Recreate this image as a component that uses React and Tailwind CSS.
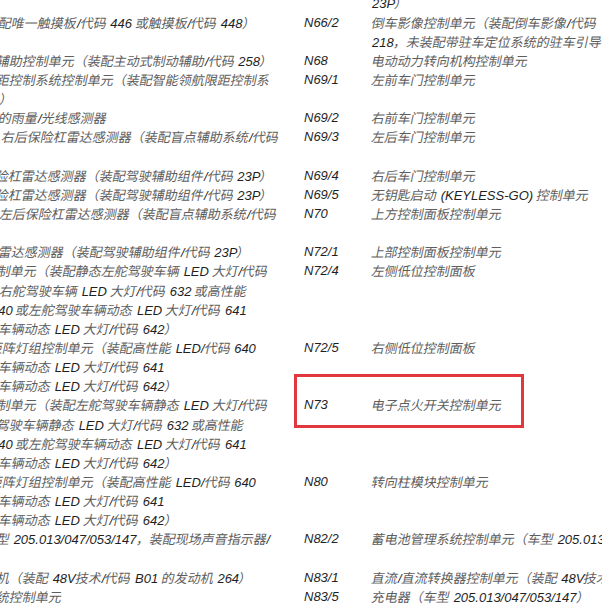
import React from 'react';

// one row per text line, all lines sit on the same 19.15px grid
const rows = [
  { l: '', lx: '', c: '', d: '23P）' },
  { l: '配唯一触摸板/代码 446 或触摸板/代码 448）', lx: 'ml-[-1px]', c: 'N66/2', d: '倒车影像控制单元（装配倒车影像/代码' },
  { l: '', lx: '', c: '', d: '218，未装配带驻车定位系统的驻车引导' },
  { l: '辅助控制单元（装配主动式制动辅助/代码 258）', lx: 'ml-[-3px]', c: 'N68', d: '电动动力转向机构控制单元' },
  { l: '距控制系统控制单元（装配智能领航限距控制系', lx: 'ml-[-3px]', c: 'N69/1', d: '左前车门控制单元' },
  { l: '）', lx: 'ml-[0px]', c: '', d: '' },
  { l: '的雨量/光线感测器', lx: 'ml-[-1px]', c: 'N69/2', d: '右前车门控制单元' },
  { l: '右后保险杠雷达感测器（装配盲点辅助系统/代码', lx: 'ml-[2px]', c: 'N69/3', d: '左后车门控制单元' },
  { l: '', lx: '', c: '', d: '' },
  { l: '险杠雷达感测器（装配驾驶辅助组件/代码 23P）', lx: 'ml-[-4px]', c: 'N69/4', d: '右后车门控制单元' },
  { l: '险杠雷达感测器（装配驾驶辅助组件/代码 23P）', lx: 'ml-[-4px]', c: 'N69/5', d: '无钥匙启动 (KEYLESS-GO) 控制单元' },
  { l: '左后保险杠雷达感测器（装配盲点辅助系统/代码', lx: 'ml-[0px]', c: 'N70', d: '上方控制面板控制单元' },
  { l: '', lx: '', c: '', d: '' },
  { l: '雷达感测器（装配驾驶辅助组件/代码 23P）', lx: 'ml-[-1px]', c: 'N72/1', d: '上部控制面板控制单元' },
  { l: '制单元（装配静态左舵驾驶车辆 LED 大灯/代码', lx: 'ml-[-2px]', c: 'N72/4', d: '左侧低位控制面板' },
  { l: '右舵驾驶车辆 LED 大灯/代码 632 或高性能', lx: 'ml-[0px]', c: '', d: '' },
  { l: '640 或左舵驾驶车辆动态 LED 大灯/代码 641', lx: 'ml-[-9px]', c: '', d: '' },
  { l: '车辆动态 LED 大灯/代码 642）', lx: 'ml-[-1px]', c: '', d: '' },
  { l: '矩阵灯组控制单元（装配高性能 LED/代码 640', lx: 'ml-[-10px]', c: 'N72/5', d: '右侧低位控制面板' },
  { l: '车辆动态 LED 大灯/代码 641', lx: 'ml-[-1px]', c: '', d: '' },
  { l: '车辆动态 LED 大灯/代码 642）', lx: 'ml-[-1px]', c: '', d: '' },
  { l: '制单元（装配左舵驾驶车辆静态 LED 大灯/代码', lx: 'ml-[-2px]', c: 'N73', d: '电子点火开关控制单元', box: true },
  { l: '驾驶车辆静态 LED 大灯/代码 632 或高性能', lx: 'ml-[-3px]', c: '', d: '' },
  { l: '640 或左舵驾驶车辆动态 LED 大灯/代码 641', lx: 'ml-[-9px]', c: '', d: '' },
  { l: '车辆动态 LED 大灯/代码 642）', lx: 'ml-[-1px]', c: '', d: '' },
  { l: '矩阵灯组控制单元（装配高性能 LED/代码 640', lx: 'ml-[-10px]', c: 'N80', d: '转向柱模块控制单元' },
  { l: '车辆动态 LED 大灯/代码 641', lx: 'ml-[-1px]', c: '', d: '' },
  { l: '车辆动态 LED 大灯/代码 642）', lx: 'ml-[-1px]', c: '', d: '' },
  { l: '型 205.013/047/053/147，装配现场声音指示器/', lx: 'ml-[-3px]', c: 'N82/2', d: '蓄电池管理系统控制单元（车型 205.013/047/053/147）' },
  { l: '', lx: '', c: '', d: '' },
  { l: '机（装配 48V技术/代码 B01 的发动机 264）', lx: 'ml-[-3px]', c: 'N83/1', d: '直流/直流转换器控制单元（装配 48V技术/代码 B01 的发动机 264）' },
  { l: '统控制单元', lx: 'ml-[-3px]', c: 'N83/5', d: '充电器（车型 205.013/047/053/147）' },
];

const CJK = /([\u3000-\u303f\u4e00-\u9fff\uff00-\uffef]+)/;

// chinese and latin runs use different fonts and tones, like the scan;
// the chinese face has no italic, so it is slanted by hand
const Mixed = ({ text }) =>
  text
    .split(CJK)
    .filter(Boolean)
    .map((part, i) =>
      CJK.test(part) ? (
        <span
          key={i}
          className="inline-block -skew-x-12 not-italic font-['Noto_Sans_CJK_SC',sans-serif] text-[#5e5e5e]"
        >
          {part}
        </span>
      ) : (
        <span key={i} className="font-['Liberation_Sans',Arial,sans-serif] text-[#1f1f1f]">
          {part}
        </span>
      )
    );

const App = () => {
  return (
    <div className="w-[602px] h-[604px] overflow-hidden bg-white italic text-[13px]">
      <div className="mt-[-6.6px]">
        {rows.map((r, i) => (
          <div key={i} className="flex h-[19.15px] leading-[19.15px] whitespace-nowrap">
            <div className="w-[304px] shrink-0 overflow-hidden">
              <div className={r.lx}>
                <Mixed text={r.l} />
              </div>
            </div>
            <div className="relative flex flex-1 min-w-0">
              {r.box && (
                <div className="absolute left-[-10px] top-[-21px] w-[230px] h-[54px] border-[3px] border-[#e2373c]" />
              )}
              <div className="w-[68px] shrink-0 font-['Liberation_Sans',Arial,sans-serif] text-[#1f1f1f]">
                {r.c}
              </div>
              <div>
                <Mixed text={r.d} />
              </div>
            </div>
          </div>
        ))}
      </div>
    </div>
  );
};

export default App;
